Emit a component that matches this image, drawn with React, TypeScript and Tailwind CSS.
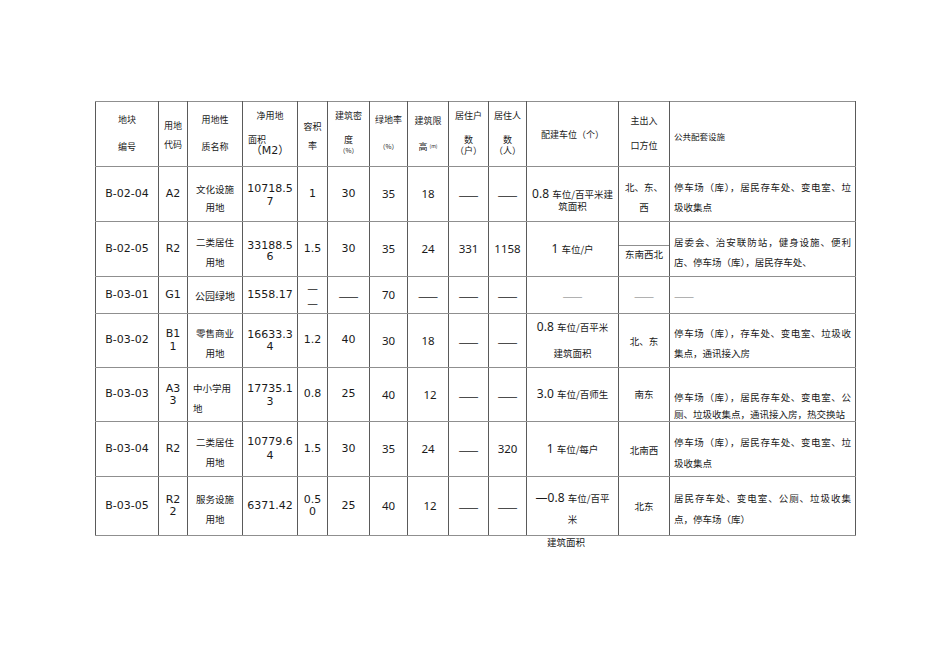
import type { ReactNode } from 'react'
import clsx from 'clsx'

/** 字体：拉丁数字用 DejaVu，中文用 Noto CJK，右半部数字用 Noto Sans。 */
const F_LAT = "font-['DejaVu_Sans','Noto_Sans_CJK_SC',sans-serif] text-[11px]"
const F_CJK = "font-['Noto_Sans_CJK_SC',sans-serif] text-[9.5px]"
const F_NUM = "font-['Noto_Sans','Noto_Sans_CJK_SC',sans-serif] text-[11.5px]"
const F_DASH = "font-['Noto_Sans_CJK_SC',sans-serif] text-[12px]"

/** 列宽（px），合计 760。 */
const COL_WIDTHS = [
  'w-[63px]',
  'w-[29px]',
  'w-[55px]',
  'w-[55px]',
  'w-[30px]',
  'w-[42px]',
  'w-[38px]',
  'w-[41px]',
  'w-[40px]',
  'w-[38px]',
  'w-[92px]',
  'w-[51px]',
  'w-[186px]',
]

interface CellProps {
  children?: ReactNode
  className?: string
  top?: boolean
}

/** 表格单元格：竖线深、横线浅。 */
function Td({ children, className, top }: CellProps) {
  return (
    <td
      className={clsx(
        'border border-x-[#5a5a5a] border-y-[#8f8f8f] p-0 text-center text-[#1a1a1a]',
        top ? 'align-top' : 'align-middle',
        className,
      )}
    >
      {children}
    </td>
  )
}

/** 多行文字，每行一个 div。 */
function Lines({ lines, className }: { lines: ReactNode[]; className?: string }) {
  return (
    <>
      {lines.map((l, i) => (
        <div key={i} className={clsx('whitespace-nowrap', className)}>
          {l}
        </div>
      ))}
    </>
  )
}

/** 配建车位：数字 + 中文单位（行高由外层决定）。 */
function Park({ n, unit }: { n?: string; unit: string }) {
  return (
    <>
      {n && <span className={clsx(F_NUM, 'text-[12px] leading-none')}>{n} </span>}
      <span className={clsx(F_CJK, 'leading-none')}>{unit}</span>
    </>
  )
}

/** 公共配套设施：首行两端对齐，末行左对齐。 */
function Facility({ a, b, className, gap }: { a: string; b: string; className: string; gap?: string }) {
  return (
    <div className={clsx(F_CJK, 'px-[4px] text-left', className)}>
      <div className="whitespace-nowrap text-justify [text-align-last:justify]">{a}</div>
      <div className={clsx('whitespace-nowrap', gap)}>{b}</div>
    </div>
  )
}

function Dash() {
  return <span className={F_DASH}>——</span>
}

function GrayDash() {
  return <span className={clsx(F_DASH, 'text-[10px] text-[#a0a0a0]')}>——</span>
}

export default function App() {
  return (
    <div className="min-h-[672px] w-[950px] bg-white pl-[95px] pt-[101px]">
      <table className="w-[760px] table-fixed border-collapse">
        <colgroup>
          {COL_WIDTHS.map((w, i) => (
            <col key={i} className={w} />
          ))}
        </colgroup>
        <tbody>
          {/* 表头 */}
          <tr className={clsx('h-[65px]', F_CJK, 'text-[9px]')}>
            <Td top>
              <div className="mt-[11px] leading-[14px]">地块</div>
              <div className="mt-[13px] leading-[14px]">编号</div>
            </Td>
            <Td top>
              <div className="mt-[17px] leading-[14px]">用地</div>
              <div className="mt-[5px] leading-[14px]">代码</div>
            </Td>
            <Td top>
              <div className="mt-[11px] leading-[14px]">用地性</div>
              <div className="mt-[13px] leading-[14px]">质名称</div>
            </Td>
            <Td top>
              <div className="mt-[7px] leading-[14px]">净用地</div>
              <div className="mt-[12px] pl-[5px] text-left leading-[10px]">面积</div>
              <div className={clsx(F_LAT, 'leading-[12px]')}>（M2）</div>
            </Td>
            <Td top>
              <div className="mt-[18px] leading-[14px]">容积</div>
              <div className="mt-[5px] leading-[14px]">率</div>
            </Td>
            <Td top>
              <div className="mt-[7px] leading-[14px]">建筑密</div>
              <div className="mt-[12px] leading-[10px]">度</div>
              <div className="mt-[1px] text-[6.5px] leading-[8px]">（%）</div>
            </Td>
            <Td top>
              <div className="mt-[11px] leading-[14px]">绿地率</div>
              <div className="mt-[14px] text-[6.5px] leading-[10px]">（%）</div>
            </Td>
            <Td top>
              <div className="mt-[12px] leading-[14px]">建筑限</div>
              <div className="mt-[12px] leading-[14px]">
                高 <sup className="text-[5px]">(m)</sup>
              </div>
            </Td>
            <Td top>
              <div className="mt-[7px] leading-[14px]">居住户</div>
              <div className="mt-[12px] leading-[10px]">数</div>
              <div className="mt-[1px] leading-[10px]">（户）</div>
            </Td>
            <Td top>
              <div className="mt-[7px] leading-[14px]">居住人</div>
              <div className="mt-[12px] leading-[10px]">数</div>
              <div className="mt-[1px] leading-[10px]">（人）</div>
            </Td>
            <Td top>
              <div className="mt-[26px] leading-[14px]">配建车位（个）</div>
            </Td>
            <Td top>
              <div className="mt-[12px] leading-[14px]">主出入</div>
              <div className="mt-[11px] leading-[14px]">口方位</div>
            </Td>
            <Td top className="pl-[4px] text-left">
              <div className="mt-[27px] text-[8.5px] leading-[14px]">公共配套设施</div>
            </Td>
          </tr>

          {/* B-02-04 */}
          <tr className="h-[55px]">
            <Td className={F_LAT}>B-02-04</Td>
            <Td className={F_LAT}>A2</Td>
            <Td className={clsx(F_CJK, 'pt-[8px]')}>
              <Lines lines={['文化设施', '用地']} className="leading-[18px]" />
            </Td>
            <Td className={clsx(F_LAT, 'break-all px-[4px] pt-[3px] leading-[12.5px]')}>10718.57</Td>
            <Td className={F_LAT}>1</Td>
            <Td className={F_LAT}>30</Td>
            <Td className={F_NUM}>35</Td>
            <Td className={F_NUM}>18</Td>
            <Td>
              <Dash />
            </Td>
            <Td>
              <Dash />
            </Td>
            <Td top className={clsx(F_CJK, 'pt-[21px]')}>
              <Lines lines={[<Park n="0.8" unit="车位/百平米建" />, <Park unit="筑面积" />]} className="leading-[12px]" />
            </Td>
            <Td className={clsx(F_CJK, 'pt-[6px]')}>
              <Lines lines={['北、东、', '西']} className="leading-[20px]" />
            </Td>
            <Td>
              <Facility a="停车场（库），居民存车处、变电室、垃" b="圾收集点" className="pt-[6px] leading-[20px]" />
            </Td>
          </tr>

          {/* B-02-05 */}
          <tr className="h-[55px]">
            <Td className={F_LAT}>B-02-05</Td>
            <Td className={F_LAT}>R2</Td>
            <Td className={clsx(F_CJK, 'pt-[5px]')}>
              <Lines lines={['二类居住', '用地']} className="leading-[20px]" />
            </Td>
            <Td className={clsx(F_LAT, 'break-all px-[4px] pt-[3px] leading-[11px]')}>33188.56</Td>
            <Td className={F_LAT}>1.5</Td>
            <Td className={F_LAT}>30</Td>
            <Td className={F_NUM}>35</Td>
            <Td className={F_NUM}>24</Td>
            <Td className={F_NUM}>331</Td>
            <Td className={F_NUM}>1158</Td>
            <Td className={F_CJK}>
              <Park n="1" unit="车位/户" />
            </Td>
            <Td top className={F_CJK}>
              <div className="h-[24px] border-b border-[#8f8f8f]" />
              <div className="pt-[2px] leading-[12px]">东南西北</div>
            </Td>
            <Td>
              <Facility a="居委会、治安联防站，健身设施、便利" b="店、停车场（库），居民存车处、" className="pt-[5px] leading-[20px]" />
            </Td>
          </tr>

          {/* B-03-01 */}
          <tr className="h-[37px]">
            <Td className={F_LAT}>B-03-01</Td>
            <Td className={F_LAT}>G1</Td>
            <Td className={clsx(F_CJK, 'text-[10px]')}>公园绿地</Td>
            <Td className={F_LAT}>1558.17</Td>
            <Td>
              <Lines lines={['—', '—']} className={clsx(F_DASH, 'text-[10px] leading-[15px]')} />
            </Td>
            <Td>
              <Dash />
            </Td>
            <Td className={F_NUM}>70</Td>
            <Td>
              <Dash />
            </Td>
            <Td>
              <Dash />
            </Td>
            <Td>
              <Dash />
            </Td>
            <Td>
              <GrayDash />
            </Td>
            <Td>
              <GrayDash />
            </Td>
            <Td className="pl-[4px] text-left">
              <GrayDash />
            </Td>
          </tr>

          {/* B-03-02 */}
          <tr className="h-[54px]">
            <Td className={F_LAT}>B-03-02</Td>
            <Td className={clsx(F_LAT, 'break-all px-[5px] leading-[12.5px]')}>B11</Td>
            <Td className={clsx(F_CJK, 'pt-[4px]')}>
              <Lines lines={['零售商业', '用地']} className="leading-[20px]" />
            </Td>
            <Td className={clsx(F_LAT, 'break-all px-[4px] leading-[12px]')}>16633.34</Td>
            <Td className={F_LAT}>1.2</Td>
            <Td className={F_LAT}>40</Td>
            <Td className={F_NUM}>30</Td>
            <Td className={F_NUM}>18</Td>
            <Td>
              <Dash />
            </Td>
            <Td>
              <Dash />
            </Td>
            <Td top className={clsx(F_CJK, 'pt-[7px]')}>
              <div className="whitespace-nowrap leading-[12px]">
                <Park n="0.8" unit="车位/百平米" />
              </div>
              <div className="mt-[14px] whitespace-nowrap leading-[12px]">
                <Park unit="建筑面积" />
              </div>
            </Td>
            <Td className={clsx(F_CJK, 'pt-[2px]')}>北、东</Td>
            <Td>
              <Facility a="停车场（库），存车处、变电室、垃圾收" b="集点，通讯接入房" className="pt-[4px] leading-[20px]" />
            </Td>
          </tr>

          {/* B-03-03 */}
          <tr className="h-[54px]">
            <Td className={F_LAT}>B-03-03</Td>
            <Td className={clsx(F_LAT, 'break-all px-[5px] leading-[12px]')}>A33</Td>
            <Td className={clsx(F_CJK, 'pl-[5px] pt-[6px] text-left')}>
              <Lines lines={['中小学用', '地']} className="leading-[20px]" />
            </Td>
            <Td className={clsx(F_LAT, 'break-all px-[4px] leading-[13px]')}>17735.13</Td>
            <Td className={F_LAT}>0.8</Td>
            <Td className={F_LAT}>25</Td>
            <Td className={F_NUM}>40</Td>
            <Td className={clsx(F_NUM, 'pl-[4px]')}>12</Td>
            <Td>
              <Dash />
            </Td>
            <Td>
              <Dash />
            </Td>
            <Td className={F_CJK}>
              <Park n="3.0" unit="车位/百师生" />
            </Td>
            <Td className={F_CJK}>南东</Td>
            <Td top>
              <Facility
                a="停车场（库），居民存车处、变电室、公"
                b="厕、垃圾收集点，通讯接入房，热交换站"
                className="pt-[23px] leading-[12px]"
                gap="mt-[5px]"
              />
            </Td>
          </tr>

          {/* B-03-04 */}
          <tr className="h-[55px]">
            <Td className={F_LAT}>B-03-04</Td>
            <Td className={F_LAT}>R2</Td>
            <Td className={clsx(F_CJK, 'pt-[6px]')}>
              <Lines lines={['二类居住', '用地']} className="leading-[20px]" />
            </Td>
            <Td className={clsx(F_LAT, 'break-all px-[4px] leading-[14px]')}>10779.64</Td>
            <Td className={F_LAT}>1.5</Td>
            <Td className={F_LAT}>30</Td>
            <Td className={F_NUM}>35</Td>
            <Td className={F_NUM}>24</Td>
            <Td>
              <Dash />
            </Td>
            <Td className={F_NUM}>320</Td>
            <Td className={F_CJK}>
              <Park n="1" unit="车位/每户" />
            </Td>
            <Td className={clsx(F_CJK, 'pt-[3px]')}>北南西</Td>
            <Td>
              <Facility a="停车场（库），居民存车处、变电室、垃" b="圾收集点" className="pt-[8px] leading-[21px]" />
            </Td>
          </tr>

          {/* B-03-05 */}
          <tr className="h-[59px]">
            <Td className={F_LAT}>B-03-05</Td>
            <Td className={clsx(F_LAT, 'break-all px-[5px] leading-[12.5px]')}>R22</Td>
            <Td className={clsx(F_CJK, 'pt-[6px]')}>
              <Lines lines={['服务设施', '用地']} className="leading-[20px]" />
            </Td>
            <Td className={F_LAT}>6371.42</Td>
            <Td className={clsx(F_LAT, 'break-all px-[4px] leading-[12px]')}>0.50</Td>
            <Td className={F_LAT}>25</Td>
            <Td className={F_NUM}>40</Td>
            <Td className={clsx(F_NUM, 'pl-[4px]')}>12</Td>
            <Td>
              <Dash />
            </Td>
            <Td>
              <Dash />
            </Td>
            <Td top className={clsx(F_CJK, 'pt-[15px]')}>
              <div className="whitespace-nowrap leading-[12px]">
                <Park n="—0.8" unit="车位/百平" />
              </div>
              <div className="mt-[9px] whitespace-nowrap leading-[12px]">
                <Park unit="米" />
              </div>
            </Td>
            <Td className={F_CJK}>北东</Td>
            <Td>
              <Facility a="居民存车处、变电室、公厕、垃圾收集" b="点，停车场（库）" className="pt-[5px] leading-[21px]" />
            </Td>
          </tr>
        </tbody>
      </table>
      <div className={clsx(F_CJK, 'pl-[452px] leading-[12px] text-[#1a1a1a]')}>建筑面积</div>
    </div>
  )
}
